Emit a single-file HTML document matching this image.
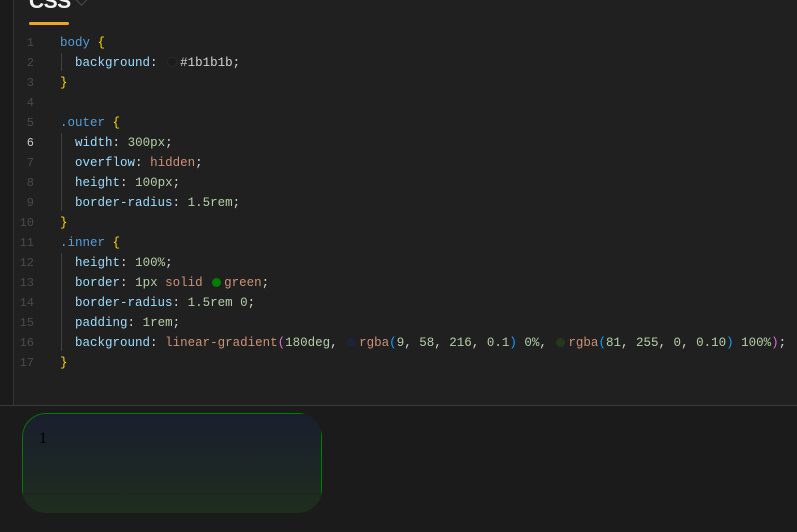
<!DOCTYPE html>
<html><head><meta charset="utf-8"><style>
html,body{margin:0;padding:0;width:797px;height:531px;overflow:hidden;background:#202020;font-family:"Liberation Sans",sans-serif}
.gut{position:absolute;left:0;top:0;width:13px;height:531px;background:#1b1b1b;border-right:1px solid #333}
.title{position:absolute;left:29px;top:-10px;color:#f2f2f2;font-weight:bold;font-size:21px;letter-spacing:-0.5px}
.chev{position:absolute;left:77px;top:-5px;width:8px;height:8px;border-right:1.5px solid #4a4a4a;border-bottom:1.5px solid #4a4a4a;transform:rotate(45deg)}
.bar{position:absolute;left:29px;top:22px;width:40px;height:3px;background:#f0a526;border-radius:2px}
.code{position:absolute;left:0;top:33px;font-family:"Liberation Mono",monospace;font-size:12.5px;line-height:20px;white-space:pre}
.ln{position:absolute;left:14px;width:20px;text-align:right;color:#4a4a4a;font-size:12px}
.ln.a{color:#c8c8c8}
.tx{position:absolute;left:60px}
.p{color:#9cdcfe}.s{color:#569cd6}.b{color:#ffd700}.n{color:#b5cea8}.k{color:#ce9178}.w{color:#d4d4d4}.m{color:#da70d6}.bl{color:#179fff}
.sw{display:inline-block;width:9px;height:9px;border-radius:50%;margin:0 3px 0 2px;vertical-align:-1px}
.guide{position:absolute;left:61px;width:1px;background:#404040}
.bottom{position:absolute;left:0;top:405px;width:797px;height:126px;background:#1b1b1b;border-top:1px solid #3a3a3a}
.outer{position:absolute;left:22px;top:413px;width:300px;height:100px;border-radius:24px;overflow:hidden}
.inner{box-sizing:content-box;height:100%;border:1px solid green;border-radius:24px 0;padding:16px;background:linear-gradient(180deg,rgba(9,58,216,0.1) 0%,rgba(81,255,0,0.10) 100%);font-family:"Liberation Serif",serif;font-size:16px;color:#000}
</style></head><body>
<div class="gut"></div>
<div class="title">CSS</div><div class="chev"></div><div class="bar"></div>
<div class="guide" style="top:53px;height:18px"></div>
<div class="guide" style="top:133px;height:78px"></div>
<div class="guide" style="top:253px;height:98px"></div>
<div class="code">
<div class="ln" style="top:0">1</div><div class="tx" style="top:0"><span class="s">body</span> <span class="b">{</span></div>
<div class="ln" style="top:20px">2</div><div class="tx" style="top:20px">  <span class="p">background</span><span class="w">:</span> <span class="sw" style="background:#1b1b1b;border:1px solid #2a2a2a;width:8px;height:8px"></span><span class="w">#1b1b1b;</span></div>
<div class="ln" style="top:40px">3</div><div class="tx" style="top:40px"><span class="b">}</span></div>
<div class="ln" style="top:60px">4</div>
<div class="ln" style="top:80px">5</div><div class="tx" style="top:80px"><span class="s">.outer</span> <span class="b">{</span></div>
<div class="ln a" style="top:100px">6</div><div class="tx" style="top:100px">  <span class="p">width</span><span class="w">:</span> <span class="n">300px</span><span class="w">;</span></div>
<div class="ln" style="top:120px">7</div><div class="tx" style="top:120px">  <span class="p">overflow</span><span class="w">:</span> <span class="k">hidden</span><span class="w">;</span></div>
<div class="ln" style="top:140px">8</div><div class="tx" style="top:140px">  <span class="p">height</span><span class="w">:</span> <span class="n">100px</span><span class="w">;</span></div>
<div class="ln" style="top:160px">9</div><div class="tx" style="top:160px">  <span class="p">border-radius</span><span class="w">:</span> <span class="n">1.5rem</span><span class="w">;</span></div>
<div class="ln" style="top:180px">10</div><div class="tx" style="top:180px"><span class="b">}</span></div>
<div class="ln" style="top:200px">11</div><div class="tx" style="top:200px"><span class="s">.inner</span> <span class="b">{</span></div>
<div class="ln" style="top:220px">12</div><div class="tx" style="top:220px">  <span class="p">height</span><span class="w">:</span> <span class="n">100%</span><span class="w">;</span></div>
<div class="ln" style="top:240px">13</div><div class="tx" style="top:240px">  <span class="p">border</span><span class="w">:</span> <span class="n">1px</span> <span class="k">solid</span> <span class="sw" style="background:green"></span><span class="k">green</span><span class="w">;</span></div>
<div class="ln" style="top:260px">14</div><div class="tx" style="top:260px">  <span class="p">border-radius</span><span class="w">:</span> <span class="n">1.5rem 0</span><span class="w">;</span></div>
<div class="ln" style="top:280px">15</div><div class="tx" style="top:280px">  <span class="p">padding</span><span class="w">:</span> <span class="n">1rem</span><span class="w">;</span></div>
<div class="ln" style="top:300px">16</div><div class="tx" style="top:300px">  <span class="p">background</span><span class="w">:</span> <span class="k">linear-gradient</span><span class="m">(</span><span class="n">180deg</span><span class="w">,</span> <span class="sw" style="background:#1e2438"></span><span class="k">rgba</span><span class="bl">(</span><span class="n">9</span><span class="w">,</span> <span class="n">58</span><span class="w">,</span> <span class="n">216</span><span class="w">,</span> <span class="n">0.1</span><span class="bl">)</span> <span class="n">0%</span><span class="w">,</span> <span class="sw" style="background:#23391c"></span><span class="k">rgba</span><span class="bl">(</span><span class="n">81</span><span class="w">,</span> <span class="n">255</span><span class="w">,</span> <span class="n">0</span><span class="w">,</span> <span class="n">0.10</span><span class="bl">)</span> <span class="n">100%</span><span class="m">)</span><span class="w">;</span></div>
<div class="ln" style="top:320px">17</div><div class="tx" style="top:320px"><span class="b">}</span></div>
</div>
<div class="bottom"></div>
<div class="outer"><div class="inner">1</div></div>
</body></html>
